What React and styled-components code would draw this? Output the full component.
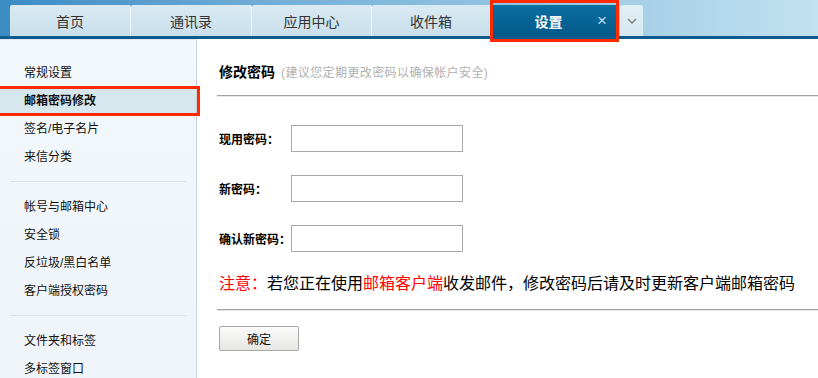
import React from 'react';
import styled, { createGlobalStyle } from 'styled-components';

const GlobalStyle = createGlobalStyle`
  html, body {
    margin: 0;
    padding: 0;
    background: #fff;
    overflow: hidden;
  }
  body {
    font-family: "Liberation Sans", "Noto Sans CJK SC", sans-serif;
    font-size: 12px;
    color: #000;
  }
`;

const Page = styled.div`
  width: 818px;
  height: 378px;
  display: flex;
  flex-direction: column;
`;

const TopBar = styled.div`
  height: 31px;
  padding: 5px 0 0 10px;
  display: flex;
  align-items: flex-end;
  background: linear-gradient(to right, #3b8bc4 0%, #75b0d8 35%, #9ccae4 70%, #c3e1f0 100%);
  border-bottom: 3px solid #0c5b8c;
`;

const Tab = styled.div`
  position: relative;
  box-sizing: border-box;
  width: ${(p) => p.$width}px;
  height: 31px;
  display: flex;
  align-items: center;
  justify-content: center;
  font-size: 14px;
  color: #333;
  background: linear-gradient(#d9eaf3, #c8dfeb);
  border-right: 1px solid #eef6fa;
  border-radius: 2px 2px 0 0;
`;

const ActiveTab = styled(Tab)`
  background: linear-gradient(#0a6fa3, #05598a);
  color: #fff;
  font-weight: bold;
  padding-right: 12px;
  border-right: none;
  margin-right: 2px;
`;

const Close = styled.span`
  position: absolute;
  right: 11px;
  top: 6px;
  font-size: 17px;
  font-weight: normal;
  color: #c3d8e6;
`;

const Highlight = styled.div`
  position: absolute;
  top: ${(p) => p.$top}px;
  bottom: ${(p) => p.$bottom}px;
  left: ${(p) => p.$left}px;
  right: ${(p) => p.$right}px;
  border: 3px solid #ff2a00;
  pointer-events: none;
  z-index: 2;
`;

const MoreTab = styled(Tab)`
  width: 23px;
  background: linear-gradient(#e2eff6, #d6e8f1);
  border-right: none;
  border-radius: 3px 3px 0 0;
`;

const Body = styled.div`
  flex: 1;
  display: flex;
  min-height: 0;
`;

const Sidebar = styled.div`
  width: 197px;
  padding-top: 19px;
  background: linear-gradient(#f3f8fc, #eef4f9);
  border-right: 1px solid #c6d3dc;
  border-top: 1px solid #e3e8ec;
  box-sizing: border-box;
`;

const MenuItem = styled.div`
  position: relative;
  height: 28px;
  line-height: 28px;
  padding-left: 24px;
  font-size: 12px;
  color: #111;
  font-weight: ${(p) => (p.$active ? 'bold' : 'normal')};
  background: ${(p) => (p.$active ? '#d6e8ee' : 'transparent')};
`;

const Separator = styled.div`
  margin: 10px 10px 11px 10px;
  border-top: 1px solid #dde3e7;
`;

const Main = styled.div`
  flex: 1;
  padding: 23px 0 0 22px;
`;

const TitleRow = styled.div`
  display: flex;
  align-items: baseline;
  height: 20px;
  line-height: 20px;
`;

const Title = styled.span`
  font-size: 14px;
  font-weight: bold;
`;

const Hint = styled.span`
  margin-left: 6px;
  font-size: 12px;
  letter-spacing: 0.4px;
  color: #b0b0b0;
`;

const Divider = styled.div`
  margin-top: ${(p) => p.$top}px;
  margin-left: -2px;
  border-top: 1px solid #a3a3a3;
  border-bottom: 1px solid #e6e6e6;
`;

const Form = styled.div`
  margin-top: 28px;
  display: flex;
  flex-direction: column;
  gap: 23px;
`;

const Row = styled.div`
  display: flex;
  align-items: center;
`;

const Label = styled.label`
  width: 72px;
  font-size: 12px;
  font-weight: bold;
`;

const Input = styled.input`
  box-sizing: border-box;
  width: 172px;
  height: 27px;
  margin: 0;
  border: 1px solid #a9a9a9;
  outline: none;
`;

const Notice = styled.div`
  margin-top: 21px;
  font-size: 16px;
  line-height: 22px;
  white-space: nowrap;
`;

const Red = styled.span`
  color: #ff0000;
`;

const Button = styled.button`
  margin-top: 15px;
  width: 80px;
  height: 25px;
  border: 1px solid #a8a8a8;
  border-radius: 2px;
  background: linear-gradient(#fbfbfb, #e6e6e3);
  font-family: inherit;
  font-size: 12px;
  color: #111;
  padding: 0;
`;

const tabs = [
  { label: '首页', width: 121 },
  { label: '通讯录', width: 121 },
  { label: '应用中心', width: 120 },
  { label: '收件箱', width: 119 },
];

const menuGroups = [
  ['常规设置', '邮箱密码修改', '签名/电子名片', '来信分类'],
  ['帐号与邮箱中心', '安全锁', '反垃圾/黑白名单', '客户端授权密码'],
  ['文件夹和标签', '多标签窗口'],
];

const fields = ['现用密码：', '新密码：', '确认新密码：'];

export default function App() {
  return (
    <Page>
      <GlobalStyle />
      <TopBar>
        {tabs.map((t) => (
          <Tab key={t.label} $width={t.width}>{t.label}</Tab>
        ))}
        <ActiveTab $width={127}>
          设置
          <Close>×</Close>
          <Highlight $top={-5} $bottom={-6} $left={-1} $right={-1} />
        </ActiveTab>
        <MoreTab $width={23}>
          <svg width="10" height="6" viewBox="0 0 10 6">
            <polyline points="1,1 5,5 9,1" fill="none" stroke="#777" strokeWidth="1.3" />
          </svg>
        </MoreTab>
      </TopBar>
      <Body>
        <Sidebar>
          {menuGroups.map((group, gi) => (
            <React.Fragment key={gi}>
              {gi > 0 && <Separator />}
              {group.map((item) => {
                const active = item === '邮箱密码修改';
                return (
                  <MenuItem key={item} $active={active}>
                    {item}
                    {active && <Highlight $top={-1} $bottom={-1} $left={-3} $right={-4} />}
                  </MenuItem>
                );
              })}
            </React.Fragment>
          ))}
        </Sidebar>
        <Main>
          <TitleRow>
            <Title>修改密码</Title>
            <Hint>(建议您定期更改密码以确保帐户安全)</Hint>
          </TitleRow>
          <Divider $top={13} />
          <Form>
            {fields.map((f) => (
              <Row key={f}>
                <Label>{f}</Label>
                <Input type="password" />
              </Row>
            ))}
          </Form>
          <Notice>
            <Red>注意：</Red>若您正在使用<Red>邮箱客户端</Red>收发邮件，修改密码后请及时更新客户端邮箱密码
          </Notice>
          <Divider $top={14} />
          <Button>确定</Button>
        </Main>
      </Body>
    </Page>
  );
}
